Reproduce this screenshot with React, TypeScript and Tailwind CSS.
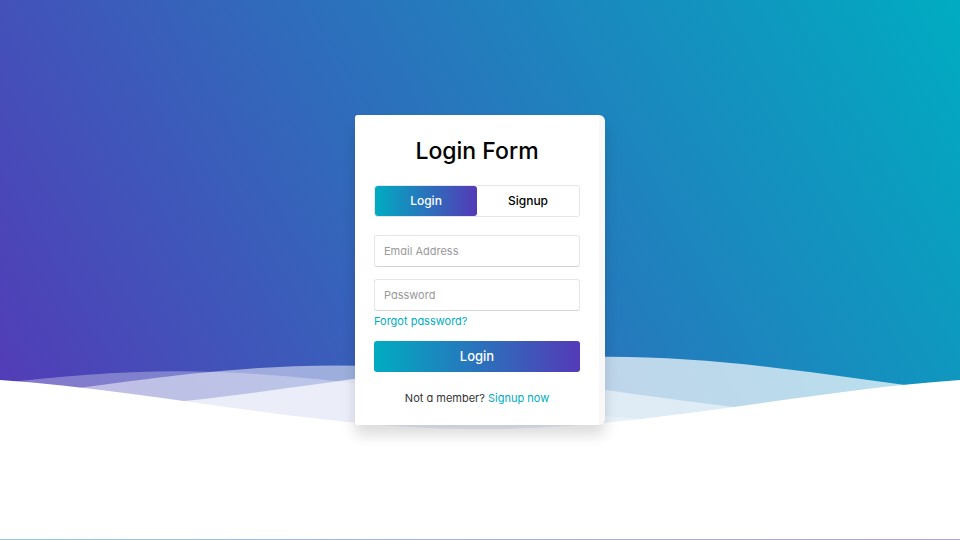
import { useState } from "react";

const WAVE = "M-160 44c30 0 58-18 88-18s58 18 88 18 58-18 88-18 58 18 88 18v44h-352z";

function Waves() {
  return (
    <svg
      className="block h-[15vh] w-full"
      viewBox="0 24 150 28"
      preserveAspectRatio="none"
      aria-hidden="true"
    >
      <path d={WAVE} transform="translate(-9 0)" fill="rgba(255,255,255,0.7)" />
      <path d={WAVE} transform="translate(124.3 3)" fill="rgba(255,255,255,0.5)" />
      <path d={WAVE} transform="translate(99.7 5)" fill="rgba(255,255,255,0.3)" />
      <path d={WAVE} transform="translate(59 7)" fill="#fff" />
    </svg>
  );
}

type Mode = "login" | "signup";

function ModeTabs({ mode, onChange }: { mode: Mode; onChange: (mode: Mode) => void }) {
  const active = "bg-[linear-gradient(to_right,#00acc1,#543ab7)] text-white";
  const idle = "text-black";
  return (
    <div className="flex h-8 rounded-[3px] border border-[#e6e6e6]">
      <button
        type="button"
        onClick={() => onChange("login")}
        className={`flex-1 rounded-[3px] text-xs font-medium ${mode === "login" ? active : idle}`}
      >
        Login
      </button>
      <button
        type="button"
        onClick={() => onChange("signup")}
        className={`flex-1 rounded-[3px] text-xs font-medium ${mode === "signup" ? active : idle}`}
      >
        Signup
      </button>
    </div>
  );
}

function Field({ label, type }: { label: string; type: string }) {
  return (
    <input
      type={type}
      aria-label={label}
      placeholder={label}
      className="block h-8 w-full rounded-[3px] border border-[#e6e6e6] border-b-[#d4d4d4] bg-white px-[9px] text-[11px] outline-none placeholder:text-[#999]"
    />
  );
}

export default function App() {
  const [mode, setMode] = useState<Mode>("login");
  return (
    <div className="relative flex min-h-screen flex-col bg-white font-[Inter,'Open_Sans',sans-serif] [font-feature-settings:'cv11']">
      <header className="bg-[linear-gradient(60deg,#543ab7_0%,#00acc1_100%)]">
        <div className="h-[65vh]" />
        <Waves />
      </header>
      <div className="flex-1" />
      <div className="h-px bg-[linear-gradient(to_right,#93c6d8,#b4a2dd)]" />

      <main className="absolute inset-0 flex items-center justify-center">
        <div className="flex w-[250px] overflow-hidden rounded-r-[6px] rounded-l-[3px] bg-[#f8f8f8] shadow-[0_10px_14px_rgba(0,0,0,0.14)]">
          <section className="flex-1 rounded-[3px] bg-white px-[19px] pt-5 pb-[19px]">
            <h1 className="text-center text-[23px] leading-8 font-medium text-black">
              Login Form
            </h1>
            <div className="mt-[18px]">
              <ModeTabs mode={mode} onChange={setMode} />
            </div>
            <form className="mt-[18px]" onSubmit={(event) => event.preventDefault()}>
              <Field label="Email Address" type="email" />
              <div className="mt-3">
                <Field label="Password" type="password" />
              </div>
              <div className="mt-[2px] flex text-[11px] leading-4">
                <a href="#forgot" className="text-[#00acc1]">
                  Forgot password?
                </a>
              </div>
              <button
                type="submit"
                className="mt-3 block h-[31px] w-full rounded-[3px] bg-[linear-gradient(to_right,#00acc1,#543ab7)] text-[13px] font-medium text-white"
              >
                Login
              </button>
              <p className="mt-[18px] text-center text-[11px] leading-4 text-[#333]">
                Not a member?{" "}
                <a href="#signup" className="text-[#00acc1]">
                  Signup now
                </a>
              </p>
            </form>
          </section>
          <div className="w-[6px]" />
        </div>
      </main>
    </div>
  );
}
